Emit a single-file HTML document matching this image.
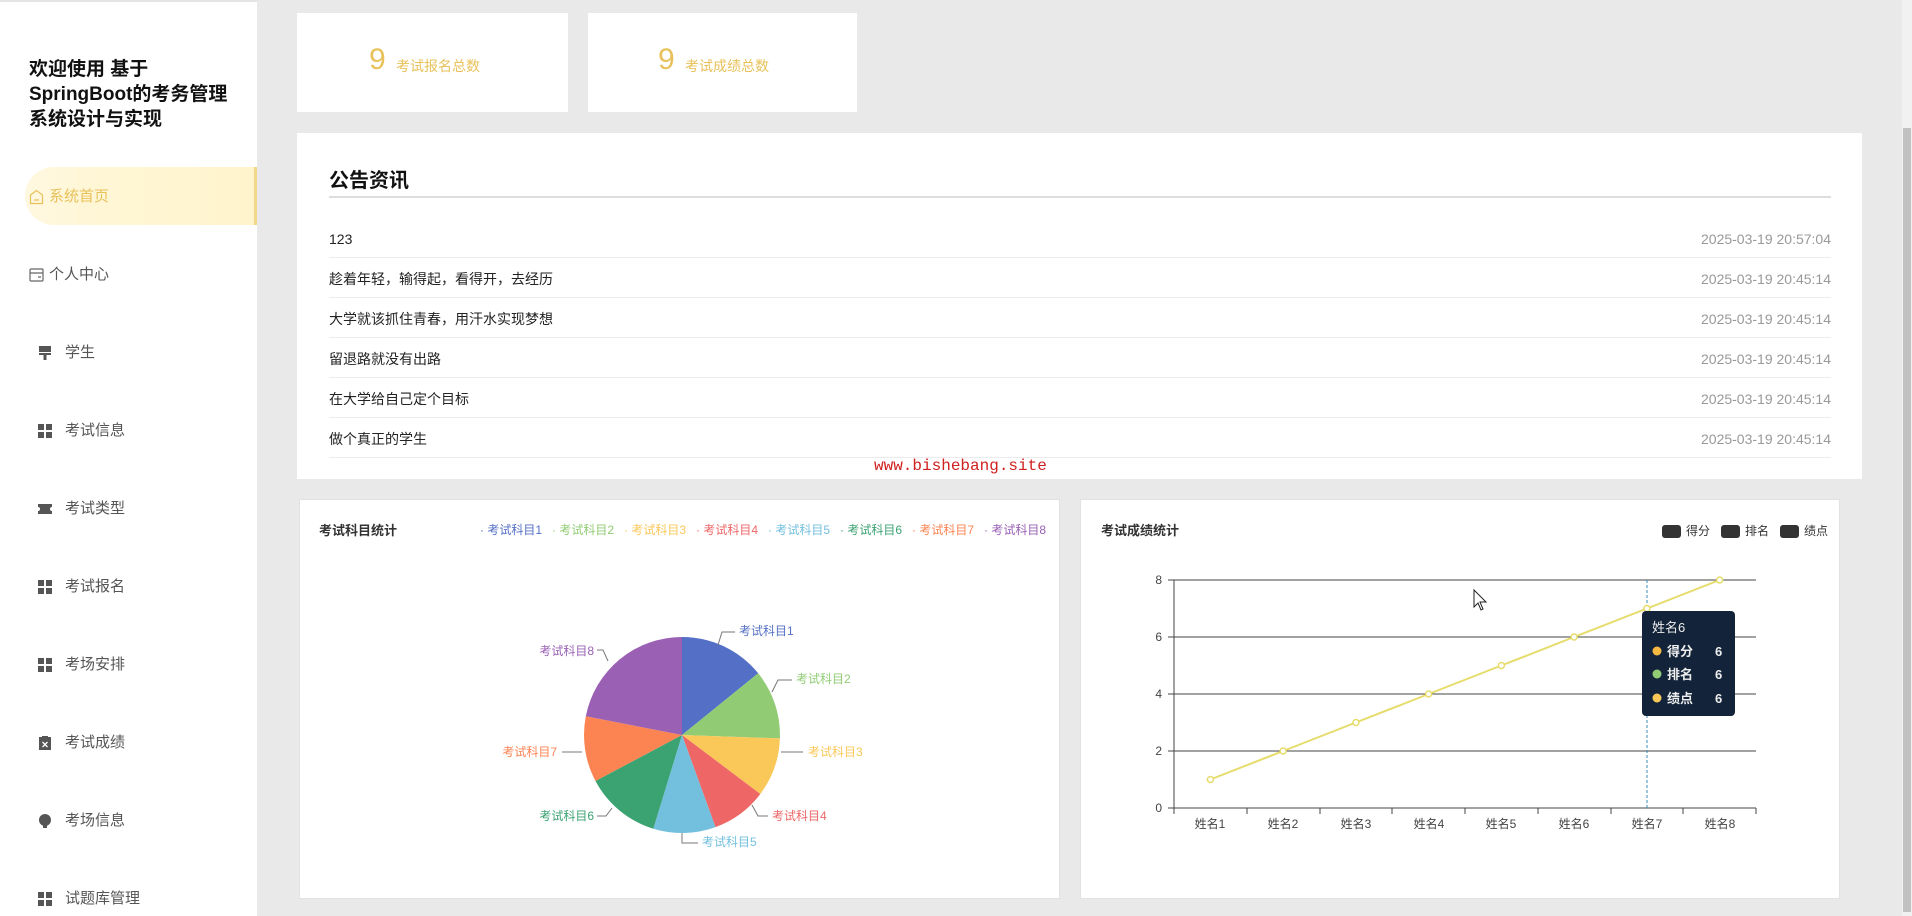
<!DOCTYPE html>
<html><head><meta charset="utf-8"><style>
*{margin:0;padding:0;box-sizing:border-box}
body{width:1912px;height:916px;overflow:hidden;background:#e9e9e9;font-family:"Liberation Sans","Noto Sans CJK SC",sans-serif;position:relative}
.a{position:absolute}
.side{left:0;top:0;width:257px;height:916px;background:#fff;border-top:2px solid #e4e4e4}
.title{left:29px;top:55px;font-size:19px;font-weight:bold;line-height:25px;color:#111;width:230px;white-space:nowrap}
.mi{position:absolute;left:0;width:257px;font-size:15px;color:#555;line-height:20px}
.ic{position:absolute;left:38px;top:3px;width:14px;height:14px}
.card{background:#fff}
.num{font-size:30px;color:#e8c15a}
.lbl{font-size:14px;color:#e8c15a}
.row{position:absolute;left:329px;width:1502px;height:40px;border-bottom:1px solid #ececec;font-size:14px;color:#222;line-height:42px}
.row span{position:absolute;right:0;top:0;color:#999}
</style></head><body>
<div class="a side">
<div class="a title">欢迎使用 基于<br>SpringBoot的考务管理<br>系统设计与实现</div>
<div class="a" style="left:25px;top:165px;width:232px;height:58px;background:linear-gradient(90deg,rgba(255,244,204,0.6),#fff6d6 30%,#fff4cc);border-radius:30px 0 0 30px;border-right:3px solid #f2d98a"></div>
<div class="mi" style="top:185px"><svg class="ic" style="left:29px;top:2px;width:15px;height:16px" viewBox="0 0 15 16"><path d="M1.5 6 L7.5 1.5 L13.5 6 V14.5 H1.5Z M5 11 H10" fill="none" stroke="#e8c15a" stroke-width="1.2"/></svg><span style="position:absolute;left:49px;color:#e8c15a">系统首页</span></div>
<div class="mi" style="top:263px"><svg class="ic" style="left:29px;top:3px;width:15px;height:14px" viewBox="0 0 15 14"><rect x="1" y="1" width="13" height="12" rx="1" fill="none" stroke="#666" stroke-width="1.2"/><path d="M1 5H14 M9 9H12" stroke="#666" stroke-width="1.2"/></svg><span style="position:absolute;left:49px">个人中心</span></div>
<div class="mi" style="top:341px"><svg class="ic" viewBox="0 0 14 14"><rect x="1" y="0" width="12" height="6" fill="#555"/><rect x="1" y="7" width="12" height="2" fill="#555"/><rect x="5.5" y="9" width="3" height="5" fill="#555"/></svg><span style="position:absolute;left:65px">学生</span></div>
<div class="mi" style="top:419px"><svg class="ic" viewBox="0 0 14 14" fill="#555"><rect x="0" y="0" width="6" height="6"/><rect x="8" y="0" width="6" height="6"/><rect x="0" y="8" width="6" height="6"/><rect x="8" y="8" width="6" height="6"/></svg><span style="position:absolute;left:65px">考试信息</span></div>
<div class="mi" style="top:497px"><svg class="ic" viewBox="0 0 14 14" fill="#555"><path d="M0 2H14V5A2 2 0 0 0 14 9V12H0V9A2 2 0 0 0 0 5Z"/></svg><span style="position:absolute;left:65px">考试类型</span></div>
<div class="mi" style="top:575px"><svg class="ic" viewBox="0 0 14 14" fill="#555"><rect x="0" y="0" width="6" height="6"/><rect x="8" y="0" width="6" height="6"/><rect x="0" y="8" width="6" height="6"/><rect x="8" y="8" width="6" height="6"/></svg><span style="position:absolute;left:65px">考试报名</span></div>
<div class="mi" style="top:653px"><svg class="ic" viewBox="0 0 14 14" fill="#555"><rect x="0" y="0" width="6" height="6"/><rect x="8" y="0" width="6" height="6"/><rect x="0" y="8" width="6" height="6"/><rect x="8" y="8" width="6" height="6"/></svg><span style="position:absolute;left:65px">考场安排</span></div>
<div class="mi" style="top:731px"><svg class="ic" viewBox="0 0 14 14"><rect x="1" y="1" width="12" height="13" fill="#555"/><rect x="4" y="0" width="6" height="3" fill="#555"/><path d="M4.5 6L9.5 11M9.5 6L4.5 11" stroke="#fff" stroke-width="1.3"/></svg><span style="position:absolute;left:65px">考试成绩</span></div>
<div class="mi" style="top:809px"><svg class="ic" viewBox="0 0 14 14" fill="#555"><circle cx="7" cy="6" r="6"/><rect x="5" y="11" width="4" height="3"/></svg><span style="position:absolute;left:65px">考场信息</span></div>
<div class="mi" style="top:887px"><svg class="ic" viewBox="0 0 14 14" fill="#555"><rect x="0" y="0" width="6" height="6"/><rect x="8" y="0" width="6" height="6"/><rect x="0" y="8" width="6" height="6"/><rect x="8" y="8" width="6" height="6"/></svg><span style="position:absolute;left:65px">试题库管理</span></div>
</div>

<div class="a card" style="left:297px;top:13px;width:271px;height:99px"><span class="a num" style="left:72px;top:30px">9</span><span class="a lbl" style="left:99px;top:43px">考试报名总数</span></div>
<div class="a card" style="left:588px;top:13px;width:269px;height:99px"><span class="a num" style="left:70px;top:30px">9</span><span class="a lbl" style="left:97px;top:43px">考试成绩总数</span></div>

<div class="a card" style="left:297px;top:133px;width:1565px;height:346px"></div>
<div class="a" style="left:329px;top:164px;font-size:20px;font-weight:bold;color:#111">公告资讯</div>
<div class="a" style="left:329px;top:196px;width:1502px;height:2px;background:#ddd"></div>
<div class="row" style="top:218px">123<span>2025-03-19 20:57:04</span></div>
<div class="row" style="top:258px">趁着年轻，输得起，看得开，去经历<span>2025-03-19 20:45:14</span></div>
<div class="row" style="top:298px">大学就该抓住青春，用汗水实现梦想<span>2025-03-19 20:45:14</span></div>
<div class="row" style="top:338px">留退路就没有出路<span>2025-03-19 20:45:14</span></div>
<div class="row" style="top:378px">在大学给自己定个目标<span>2025-03-19 20:45:14</span></div>
<div class="row" style="top:418px">做个真正的学生<span>2025-03-19 20:45:14</span></div>
<div class="a" style="left:874px;top:457px;font-family:'Liberation Mono',monospace;font-size:16px;color:#d02020">www.bishebang.site</div>

<div class="a card" style="left:299px;top:499px;width:761px;height:400px;border:1px solid #e2e2e2"></div>
<div class="a card" style="left:1080px;top:499px;width:760px;height:400px;border:1px solid #e2e2e2"></div>

<svg class="a" style="left:0;top:0" width="1912" height="916" font-family="Liberation Sans, Noto Sans CJK SC, sans-serif">
<text x="319" y="535" font-size="13" font-weight="bold" fill="#333">考试科目统计</text>
<g font-size="12">
<text x="480" y="534" fill="#5470c6">· 考试科目1</text>
<text x="552" y="534" fill="#91cc75">· 考试科目2</text>
<text x="624" y="534" fill="#fac858">· 考试科目3</text>
<text x="696" y="534" fill="#ee6666">· 考试科目4</text>
<text x="768" y="534" fill="#73c0de">· 考试科目5</text>
<text x="840" y="534" fill="#3ba272">· 考试科目6</text>
<text x="912" y="534" fill="#fc8452">· 考试科目7</text>
<text x="984" y="534" fill="#9a60b4">· 考试科目8</text>
</g>
<path d="M682 735L682 637A98 98 0 0 1 758.2 673.3Z" fill="#5470c6"/>
<path d="M682 735L758.2 673.3A98 98 0 0 1 779.9 738.4Z" fill="#91cc75"/>
<path d="M682 735L779.9 738.4A98 98 0 0 1 760.3 794Z" fill="#fac858"/>
<path d="M682 735L760.3 794A98 98 0 0 1 715.5 827.1Z" fill="#ee6666"/>
<path d="M682 735L715.5 827.1A98 98 0 0 1 653.3 828.7Z" fill="#73c0de"/>
<path d="M682 735L653.3 828.7A98 98 0 0 1 595.5 781Z" fill="#3ba272"/>
<path d="M682 735L595.5 781A98 98 0 0 1 585.8 716.3Z" fill="#fc8452"/>
<path d="M682 735L585.8 716.3A98 98 0 0 1 682 637Z" fill="#9a60b4"/>
<g fill="none" stroke="#777" stroke-width="1">
<path d="M718 645L722 632H735"/><path d="M772 692L778 680H792"/><path d="M781 752H803"/><path d="M752 805L758 816H768"/><path d="M682 833V843H698"/><path d="M612 808L606 816H597"/><path d="M582 752H562"/><path d="M608 661L603 650H597"/>
</g>
<g font-size="12">
<text x="739" y="635" fill="#5470c6">考试科目1</text>
<text x="796" y="683" fill="#91cc75">考试科目2</text>
<text x="808" y="756" fill="#fac858">考试科目3</text>
<text x="772" y="820" fill="#ee6666">考试科目4</text>
<text x="702" y="846" fill="#73c0de">考试科目5</text>
<text x="594" y="820" fill="#3ba272" text-anchor="end">考试科目6</text>
<text x="557" y="756" fill="#fc8452" text-anchor="end">考试科目7</text>
<text x="594" y="655" fill="#9a60b4" text-anchor="end">考试科目8</text>
</g>

<text x="1101" y="535" font-size="13" font-weight="bold" fill="#333">考试成绩统计</text>
<g font-size="12" fill="#333">
<rect x="1662" y="525" width="19" height="13" rx="3" fill="#333"/><text x="1686" y="535">得分</text>
<rect x="1721" y="525" width="19" height="13" rx="3" fill="#333"/><text x="1745" y="535">排名</text>
<rect x="1780" y="525" width="19" height="13" rx="3" fill="#333"/><text x="1804" y="535">绩点</text>
</g>
<g stroke="#444" stroke-width="1">
<path d="M1174 580H1756M1174 637H1756M1174 694H1756M1174 751H1756M1174 808H1756M1174 580V808"/>
<path d="M1168 580H1174M1168 637H1174M1168 694H1174M1168 751H1174M1168 808H1174"/>
<path d="M1174 808V814M1247 808V814M1320 808V814M1392 808V814M1465 808V814M1538 808V814M1611 808V814M1683 808V814M1756 808V814"/>
</g>
<g font-size="12" fill="#444" text-anchor="end">
<text x="1162" y="584">8</text><text x="1162" y="641">6</text><text x="1162" y="698">4</text><text x="1162" y="755">2</text><text x="1162" y="812">0</text>
</g>
<g font-size="12" fill="#444" text-anchor="middle">
<text x="1210" y="828">姓名1</text><text x="1283" y="828">姓名2</text><text x="1356" y="828">姓名3</text><text x="1429" y="828">姓名4</text><text x="1501" y="828">姓名5</text><text x="1574" y="828">姓名6</text><text x="1647" y="828">姓名7</text><text x="1720" y="828">姓名8</text>
</g>
<path d="M1647 580V808" stroke="#3a8fb7" stroke-dasharray="3 2"/>
<polyline points="1210.4,779.5 1283.1,751 1355.9,722.5 1428.6,694 1501.4,665.5 1574.1,637 1646.9,608.5 1719.6,580" fill="none" stroke="#e6dc6c" stroke-width="2"/>
<g fill="#fff" stroke="#e6dc6c" stroke-width="1.5">
<circle cx="1210.4" cy="779.5" r="3"/><circle cx="1283.1" cy="751" r="3"/><circle cx="1355.9" cy="722.5" r="3"/><circle cx="1428.6" cy="694" r="3"/><circle cx="1501.4" cy="665.5" r="3"/><circle cx="1574.1" cy="637" r="3"/><circle cx="1646.9" cy="608.5" r="3"/><circle cx="1719.6" cy="580" r="3"/>
</g>
<rect x="1642" y="611" width="93" height="105" rx="4" fill="#13243a"/>
<text x="1652" y="632" font-size="13" fill="#eee">姓名6</text>
<circle cx="1657" cy="651" r="4.5" fill="#f5b942"/><circle cx="1657" cy="674" r="4.5" fill="#91cc75"/><circle cx="1657" cy="698" r="4.5" fill="#fac858"/>
<g font-size="13" fill="#eee" font-weight="bold"><text x="1667" y="656">得分</text><text x="1667" y="679">排名</text><text x="1667" y="703">绩点</text>
<text x="1715" y="656">6</text><text x="1715" y="679">6</text><text x="1715" y="703">6</text></g>
<path d="M1474 590V607L1478 603L1481 610L1483 609L1480 602H1486Z" fill="#fff" stroke="#222" stroke-width="1"/>
</svg>

<div class="a" style="left:1902px;top:0;width:10px;height:916px;background:#f1f1f1"></div>
<div class="a" style="left:1903px;top:128px;width:8px;height:784px;background:#c1c1c1"></div>
</body></html>
